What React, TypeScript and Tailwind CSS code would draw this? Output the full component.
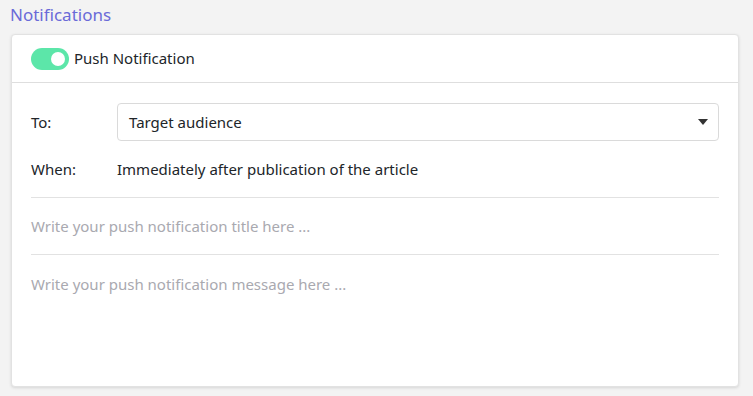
import React from 'react';

export default function App() {
  return (
    <div className="w-[753px] h-[396px] bg-[#f3f3f3] font-['Noto_Sans',sans-serif] text-[15px] text-[#212529] overflow-hidden">
      <div className="px-[10px] pt-[3px] h-[34px] text-[17px] text-[#6a6ad8] leading-[24px]">Notifications</div>
      <div className="ml-[11px] w-[728px] h-[353px] bg-white rounded-[4px] border border-[#e2e2e2] shadow-[0_1px_3px_rgba(0,0,0,0.12)] flex flex-col">
        <div className="h-[48px] flex items-center px-[19px] border-b border-[#dedede]">
          <div className="w-[38px] h-[22px] rounded-full bg-[#5ce6a9] flex items-center justify-end pr-[4px]">
            <div className="w-[14px] h-[14px] rounded-full bg-white" />
          </div>
          <span className="ml-[5px]">Push Notification</span>
        </div>
        <div className="px-[19px] pt-[20px]">
          <div className="flex items-center h-[38px]">
            <span className="w-[86px]">To:</span>
            <div className="flex-1 h-[38px] border border-[#dadada] rounded-[4px] flex items-center justify-between pl-[11px] pr-[10px]">
              <span>Target audience</span>
              <svg width="10" height="6" viewBox="0 0 10 6"><path d="M0 0h10L5 6z" fill="#333" /></svg>
            </div>
          </div>
          <div className="flex items-center h-[20px] mt-[18px]">
            <span className="w-[86px]">When:</span>
            <span>Immediately after publication of the article</span>
          </div>
          <div className="mt-[18px] border-t border-[#e2e2e2] h-[57px] flex items-center text-[#a9a9b0]">
            Write your push notification title here ...
          </div>
          <div className="border-t border-[#e2e2e2] pt-[18px] text-[#a9a9b0]">
            Write your push notification message here ...
          </div>
        </div>
      </div>
    </div>
  );
}
